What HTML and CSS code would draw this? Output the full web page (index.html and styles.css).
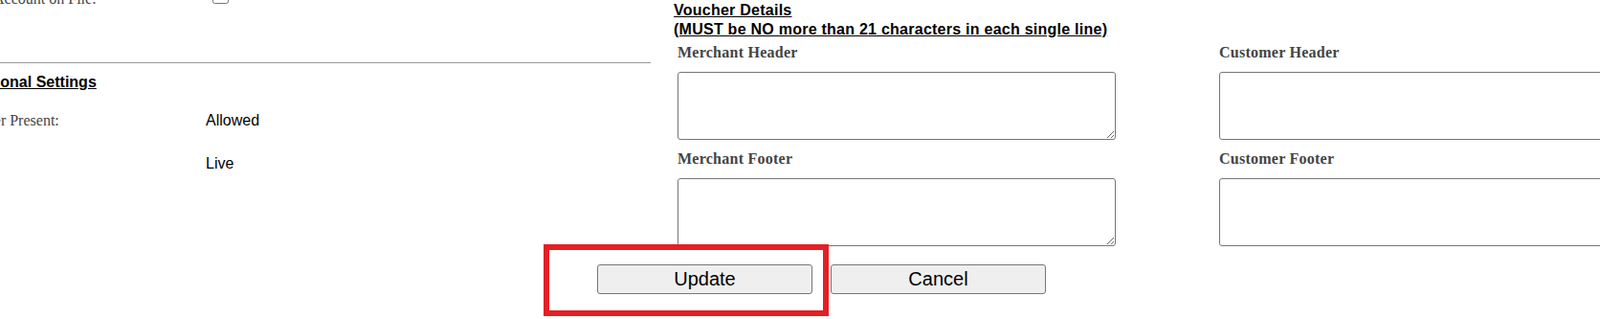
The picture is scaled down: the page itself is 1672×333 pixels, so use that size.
FILE: index.html
```html
<!DOCTYPE html>
<html lang="en">
<head>
  <meta charset="UTF-8" />
  <title>Terminal Settings</title>
  <link rel="stylesheet" href="styles.css">
</head>
<body>
  <div class="page">
    <div class="settings">
      <div class="row row-first">
        <span class="label">Charge Account on File:</span>
        <span class="value"><input type="checkbox" class="check" /></span>
      </div>
      <hr class="divider" />
      <h3 class="section-title">Additional Settings</h3>
      <div class="row">
        <span class="label">Customer Present:</span>
        <span class="value">Allowed</span>
      </div>
      <div class="row">
        <span class="label">Mode:</span>
        <span class="value">Live</span>
      </div>
    </div>

    <div class="voucher">
      <h3 class="voucher-title">Voucher Details<br />(MUST be NO more than 21 characters in each single line)</h3>
      <div class="voucher-grid">
        <div class="field">
          <label for="mh">Merchant Header</label>
          <textarea id="mh"></textarea>
        </div>
        <div class="field">
          <label for="ch">Customer Header</label>
          <textarea id="ch"></textarea>
        </div>
        <div class="field">
          <label for="mf">Merchant Footer</label>
          <textarea id="mf"></textarea>
        </div>
        <div class="field">
          <label for="cf">Customer Footer</label>
          <textarea id="cf"></textarea>
        </div>
      </div>
    </div>

    <div class="actions">
      <div class="marked">
        <button type="button" class="btn">Update</button>
        <span class="highlight"></span>
      </div>
      <button type="button" class="btn">Cancel</button>
    </div>
  </div>
</body>
</html>
```

FILE: styles.css
```css
* {
  box-sizing: border-box;
}
html {
  overflow: hidden;
}
body {
  margin: 0;
  min-height: 333px;
  background: #fff;
  font-family: "Liberation Serif", serif;
  font-size: 16px;
  color: #000;
}
.page {
  width: 1829px;
  margin-left: -56px;
  padding-bottom: 30px;
  display: grid;
  grid-template-columns: 736px 1069px;
  column-gap: 24px;
}

/* left column */
.settings {
  margin-top: -23px;
}
.row {
  display: grid;
  grid-template-columns: 271px 1fr;
  line-height: 20px;
  padding: 12px 0 13px;
}
.label {
  color: #444;
  white-space: nowrap;
}
.value {
  font-family: "Liberation Sans", Arial, sans-serif;
}
.check {
  width: 17px;
  height: 17px;
  margin: -2px 0 0 7px;
  vertical-align: top;
}
.divider {
  border: 0;
  border-top: 1px solid #999;
  margin: 43px 0 10px;
}
.section-title {
  margin: 0 0 8px 11px;
  font-family: "Liberation Sans", Arial, sans-serif;
  font-size: 16px;
  line-height: 20px;
  text-decoration: underline;
}

/* right column */
.voucher {
  padding-top: 1px;
}
.voucher-title {
  margin: 0 0 4px;
  font-family: "Liberation Sans", Arial, sans-serif;
  font-size: 16px;
  line-height: 20px;
  letter-spacing: 0.25px;
  text-decoration: underline;
}
.voucher-grid {
  margin-left: 4px;
  display: grid;
  grid-template-columns: 458px 458px;
  column-gap: 108px;
}
.field label {
  display: block;
  font-weight: bold;
  color: #444;
  line-height: 20px;
  letter-spacing: 0.25px;
  padding-bottom: 10px;
}
.field textarea {
  display: block;
  width: 458px;
  height: 71px;
  margin: 0 0 10px;
  border: 1px solid #767676;
  border-radius: 3px;
  background: #fff;
}

/* buttons */
.actions {
  grid-column: 1 / -1;
  display: flex;
  justify-content: center;
  gap: 19px;
  padding-top: 9px;
}
.marked {
  position: relative;
}
.btn {
  width: 225px;
  height: 31px;
  background: #efefef;
  border: 1px solid #767676;
  border-radius: 3px;
  font-family: "Liberation Sans", Arial, sans-serif;
  font-size: 20px;
  color: #000;
  padding: 0;
}
.highlight {
  position: absolute;
  left: -56px;
  top: -21px;
  width: 298px;
  height: 75px;
  border: 6px solid #e51f24;
}
```
